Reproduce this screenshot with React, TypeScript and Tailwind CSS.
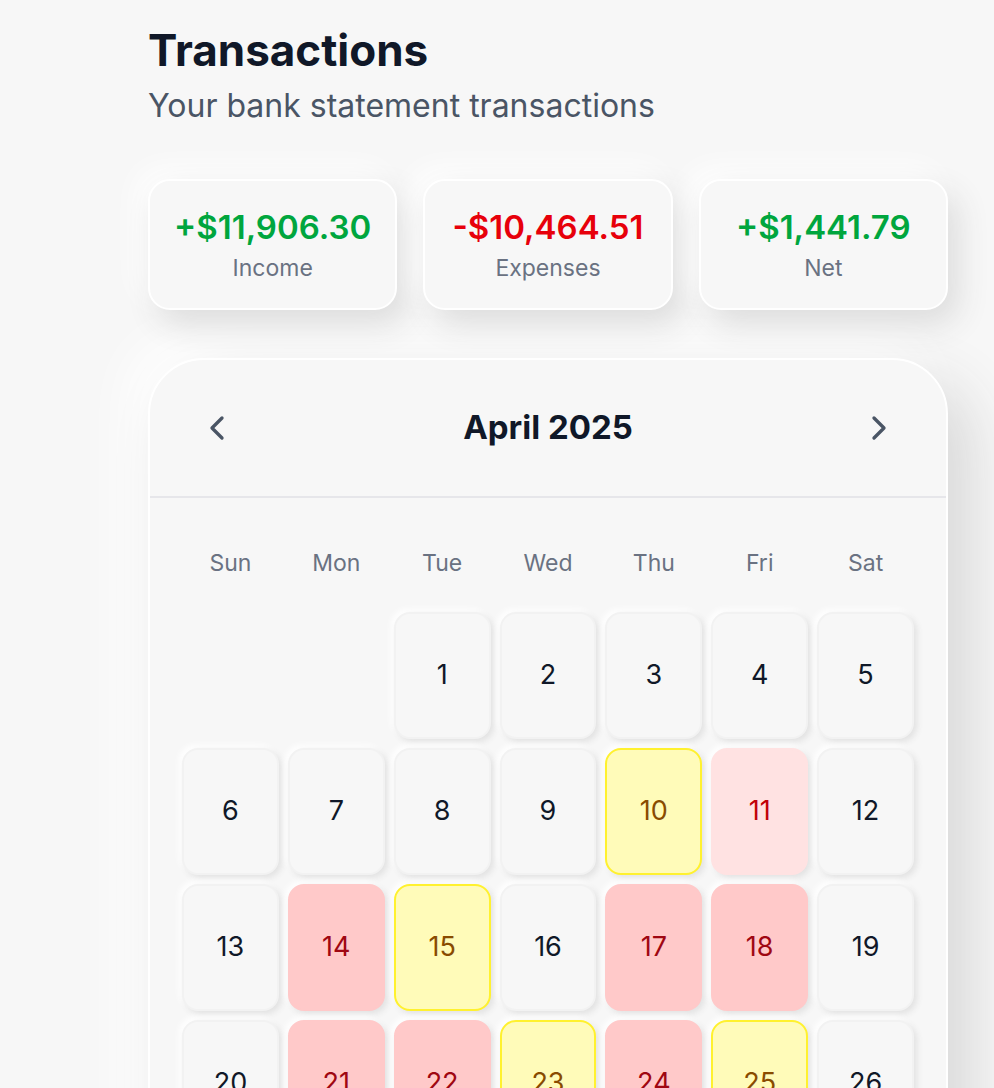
import { ChevronLeft, ChevronRight } from "lucide-react";

type Kind = "none" | "red" | "light" | "yellow";

const marks: Record<number, Kind> = {
  10: "yellow",
  11: "light",
  14: "red",
  15: "yellow",
  17: "red",
  18: "red",
  21: "red",
  22: "red",
  23: "yellow",
  24: "red",
  25: "yellow",
  28: "red",
  29: "yellow",
};

const kindClass: Record<Kind, string> = {
  none: "bg-[#f7f7f7] text-gray-900 border-[#f2f2f2]",
  red: "bg-[#ffc9c9] text-[#9f0712] border-[#ffc9c9]",
  light: "bg-[#ffe2e2] text-[#c10007] border-[#ffe2e2]",
  yellow: "bg-[#fffbb9] text-[#894b00] border-[#fff12e]",
};

const stats = [
  { value: "+$11,906.30", label: "Income", color: "text-[#00a63e]" },
  { value: "-$10,464.51", label: "Expenses", color: "text-[#e7000b]" },
  { value: "+$1,441.79", label: "Net", color: "text-[#00a63e]" },
];

const weekDays = ["Sun", "Mon", "Tue", "Wed", "Thu", "Fri", "Sat"];

export default function App() {
  // April 2025 starts on a Tuesday
  const cells: (number | null)[] = [null, null, ...Array.from({ length: 30 }, (_, i) => i + 1)];

  return (
    <div className="min-h-screen bg-[#f7f7f7] font-['Inter',sans-serif] overflow-hidden">
      <div className="pl-[148px] pt-[24px]">
        <div className="w-[800px]">
          <h1 className="text-[44px] leading-[52px] font-bold text-gray-900">Transactions</h1>
          <p className="text-[32px] leading-[40px] text-gray-600 mt-[10px]">Your bank statement transactions</p>

          {/* Summary cards */}
          <div className="grid grid-cols-3 gap-[26px] mt-[53px]">
            {stats.map((s) => (
              <div
                key={s.label}
                className="h-[131px] rounded-[22px] border-2 border-white bg-[#f7f7f7] flex flex-col items-center justify-center shadow-[10px_14px_32px_#dcdcdc,-10px_-10px_30px_#ffffff]"
              >
                <div className={`text-[33px] leading-[40px] font-semibold ${s.color}`}>{s.value}</div>
                <div className="text-[23px] leading-[30px] text-gray-500 mt-[6px]">{s.label}</div>
              </div>
            ))}
          </div>

          {/* Calendar */}
          <div className="mt-[48px] rounded-[56px] border-2 border-white bg-[#f7f7f7] shadow-[24px_24px_60px_#d8d8d8,-20px_-20px_50px_#ffffff]">
            <div className="h-[138px] px-[47px] flex items-center justify-between border-b-2 border-[#e6e6ea]">
              <ChevronLeft size={40} strokeWidth={2} className="text-gray-600" />
              <div className="text-[33px] font-bold text-gray-900">April 2025</div>
              <ChevronRight size={40} strokeWidth={2} className="text-gray-600" />
            </div>
            <div className="px-[32px] pt-[50px] pb-10">
              <div className="grid grid-cols-7 gap-[9px] mb-[34px]">
                {weekDays.map((d) => (
                  <div key={d} className="text-center text-[23px] leading-[30px] text-gray-500">
                    {d}
                  </div>
                ))}
              </div>
              <div className="grid grid-cols-7 gap-[9px]">
                {cells.map((day, i) =>
                  day === null ? (
                    <div key={`e${i}`} />
                  ) : (
                    <div
                      key={day}
                      className={`h-[127px] rounded-[16px] border-2 flex items-center justify-center text-[27px] shadow-[3px_3px_6px_#e2e2e2,-3px_-3px_6px_#ffffff] ${kindClass[marks[day] ?? "none"]}`}
                    >
                      {day}
                    </div>
                  )
                )}
              </div>
            </div>
          </div>
        </div>
      </div>
    </div>
  );
}
